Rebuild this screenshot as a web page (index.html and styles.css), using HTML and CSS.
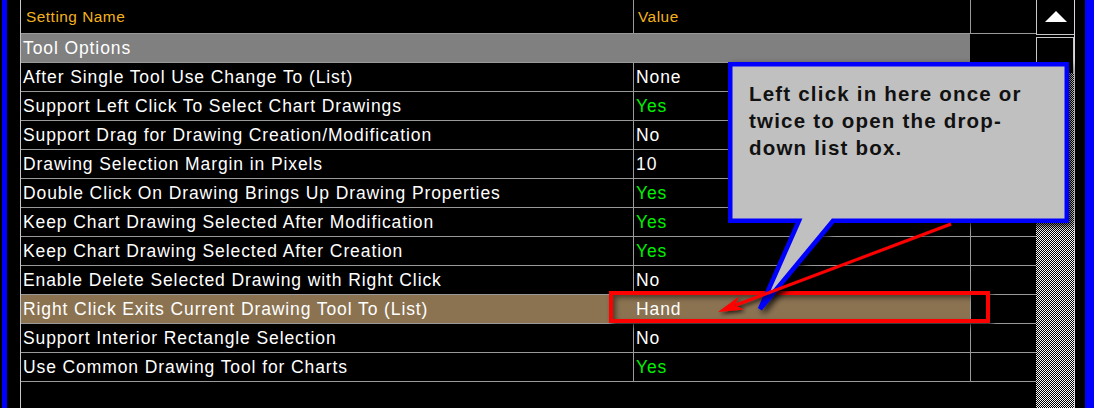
FILE: index.html
```html
<!DOCTYPE html>
<html>
<head>
<meta charset="utf-8">
<link rel="stylesheet" href="styles.css">
</head>
<body>
<div class="window">
  <div class="gutter-left"><div class="bar"></div></div>
  <div class="sheet">
    <div class="row head">
      <div class="cell">Setting Name</div>
      <div class="cell">Value</div>
      <div class="cell extra"></div>
    </div>
    <div class="row group">
      <div class="cell">Tool Options</div>
      <div class="cell extra"></div>
    </div>
    <div class="row"><div class="cell">After Single Tool Use Change To (List)</div><div class="cell">None</div><div class="cell extra"></div></div>
    <div class="row"><div class="cell">Support Left Click To Select Chart Drawings</div><div class="cell yes">Yes</div><div class="cell extra"></div></div>
    <div class="row"><div class="cell">Support Drag for Drawing Creation/Modification</div><div class="cell">No</div><div class="cell extra"></div></div>
    <div class="row"><div class="cell">Drawing Selection Margin in Pixels</div><div class="cell">10</div><div class="cell extra"></div></div>
    <div class="row"><div class="cell">Double Click On Drawing Brings Up Drawing Properties</div><div class="cell yes">Yes</div><div class="cell extra"></div></div>
    <div class="row"><div class="cell">Keep Chart Drawing Selected After Modification</div><div class="cell yes">Yes</div><div class="cell extra"></div></div>
    <div class="row"><div class="cell">Keep Chart Drawing Selected After Creation</div><div class="cell yes">Yes</div><div class="cell extra"></div></div>
    <div class="row"><div class="cell">Enable Delete Selected Drawing with Right Click</div><div class="cell">No</div><div class="cell extra"></div></div>
    <div class="row selected"><div class="cell">Right Click Exits Current Drawing Tool To (List)</div><div class="cell">Hand</div><div class="cell extra"></div></div>
    <div class="row"><div class="cell">Support Interior Rectangle Selection</div><div class="cell">No</div><div class="cell extra"></div></div>
    <div class="row"><div class="cell">Use Common Drawing Tool for Charts</div><div class="cell yes">Yes</div><div class="cell extra"></div></div>
  </div>
  <div class="scrollbar">
    <div class="btn-up">
      <svg width="22" height="11" viewBox="0 0 22 11"><polygon points="11,0 22,11 0,11" fill="#ffffff"/></svg>
    </div>
    <div class="thumb"></div>
    <div class="track"></div>
  </div>
  <div class="gutter-right"><div class="bar"></div></div>

  <div class="highlight-box"></div>

  <div class="callout">
    <svg class="callout-shape" width="385" height="270" viewBox="700 55 385 270">
      <defs>
        <filter id="sh" x="-10%" y="-10%" width="130%" height="130%">
          <feDropShadow dx="3" dy="3" stdDeviation="3" flood-color="#000" flood-opacity="0.8"/>
        </filter>
      </defs>
      <path d="M730.25 64.25 H1066.75 V220.75 H833 L760 309 L799 220.75 H730.25 Z" fill="#c0c0c0" stroke="#0000ff" stroke-width="4.5" stroke-miterlimit="4" filter="url(#sh)"/>
    </svg>
    <div class="callout-text">Left click in here once or<br>twice to open the drop-<br>down list box.</div>
  </div>

  <svg class="arrow" width="260" height="110" viewBox="710 215 260 110">
    <defs>
      <filter id="ash" x="-10%" y="-20%" width="130%" height="150%">
        <feDropShadow dx="2" dy="2" stdDeviation="2" flood-color="#000" flood-opacity="0.8"/>
      </filter>
    </defs>
    <g filter="url(#ash)">
      <line x1="951" y1="224" x2="736" y2="305" stroke="#ff0000" stroke-width="3"/>
      <polygon points="718,312 739,296.6 735,305.6 744,309.6" fill="#ff0000"/>
    </g>
  </svg>
</div>
</body>
</html>
```

FILE: styles.css
```css
html, body {
  margin: 0;
  padding: 0;
  background: #000;
}

body {
  width: 1094px;
  height: 408px;
  overflow: hidden;
  font-family: "Liberation Sans", Arial, sans-serif;
}

.window {
  position: relative;
  display: flex;
  width: 1094px;
  height: 408px;
  background: #000;
}

.gutter-left {
  width: 20px;
  flex: none;
  padding-left: 2px;
  box-sizing: border-box;
}

.gutter-left .bar {
  width: 5px;
  height: 100%;
  background: #0000ff;
}

.sheet {
  width: 1016px;
  flex: none;
  border-left: 1px solid #c8c8c8;
  box-sizing: border-box;
  height: 408px;
}

.row {
  display: grid;
  grid-template-columns: 613px 337px 1fr;
  height: 29px;
  border-bottom: 1px solid #9a9a9a;
  box-sizing: border-box;
  color: #ffffff;
  font-size: 17.5px;
  letter-spacing: 0.9px;
  line-height: 28px;
}

.cell {
  border-right: 1px solid #9a9a9a;
  box-sizing: border-box;
  padding-left: 2px;
  white-space: nowrap;
  overflow: hidden;
}

.cell.extra {
  border-right: none;
}

.row.head {
  height: 34px;
  line-height: 33px;
  font-size: 15.4px;
  letter-spacing: 0.5px;
  color: #f2b21c;
}

.row.head .cell {
  padding-left: 5px;
}

.row.head .cell:nth-child(2) {
  padding-left: 4px;
}

.row.group {
  grid-template-columns: 949px 1fr;
}

.row.group .cell:first-child {
  background: #808080;
  border-right: none;
}

.row.selected .cell:first-child {
  background: #8b7352;
  border-right-color: #8b7352;
}

.row.selected .cell:nth-child(2) {
  background: #8b7352;
}

.yes {
  color: #00f000;
}

.scrollbar {
  width: 38px;
  flex: none;
  display: flex;
  flex-direction: column;
}

.btn-up {
  height: 35px;
  flex: none;
  border-left: 1px solid #c8c8c8;
  border-bottom: 1px solid #c8c8c8;
  box-sizing: border-box;
  display: flex;
  justify-content: center;
  padding-top: 11px;
}

.thumb {
  margin-top: 2px;
  height: 36px;
  flex: none;
  border: 1px solid #c8c8c8;
  border-bottom: none;
  box-sizing: border-box;
  background: #000;
}

.track {
  flex: 1;
  background: repeating-conic-gradient(#ffffff 0 25%, #000000 0 50%) 0 0 / 2px 2px;
}

.gutter-right {
  width: 20px;
  flex: none;
  border-left: 1px solid #d8d8d8;
  box-sizing: border-box;
  padding-left: 10px;
}

.gutter-right .bar {
  width: 9px;
  height: 100%;
  background: #0000ff;
}

.highlight-box {
  position: absolute;
  left: 609px;
  top: 291px;
  width: 381px;
  height: 32px;
  border: 4px solid #ff0000;
  box-sizing: border-box;
  box-shadow: 3px 3px 5px rgba(0, 0, 0, 0.75), inset 3px 3px 5px rgba(0, 0, 0, 0.45);
}

.callout {
  position: absolute;
  left: 700px;
  top: 55px;
  width: 385px;
  height: 270px;
}

.callout-shape {
  position: absolute;
  left: 0;
  top: 0;
}

.callout-text {
  position: relative;
  padding: 25px 0 0 49px;
  font-family: "Liberation Sans", Arial, sans-serif;
  font-weight: bold;
  font-size: 20.5px;
  line-height: 27px;
  letter-spacing: 1.2px;
  color: #111111;
}

.arrow {
  position: absolute;
  left: 710px;
  top: 215px;
}
```
